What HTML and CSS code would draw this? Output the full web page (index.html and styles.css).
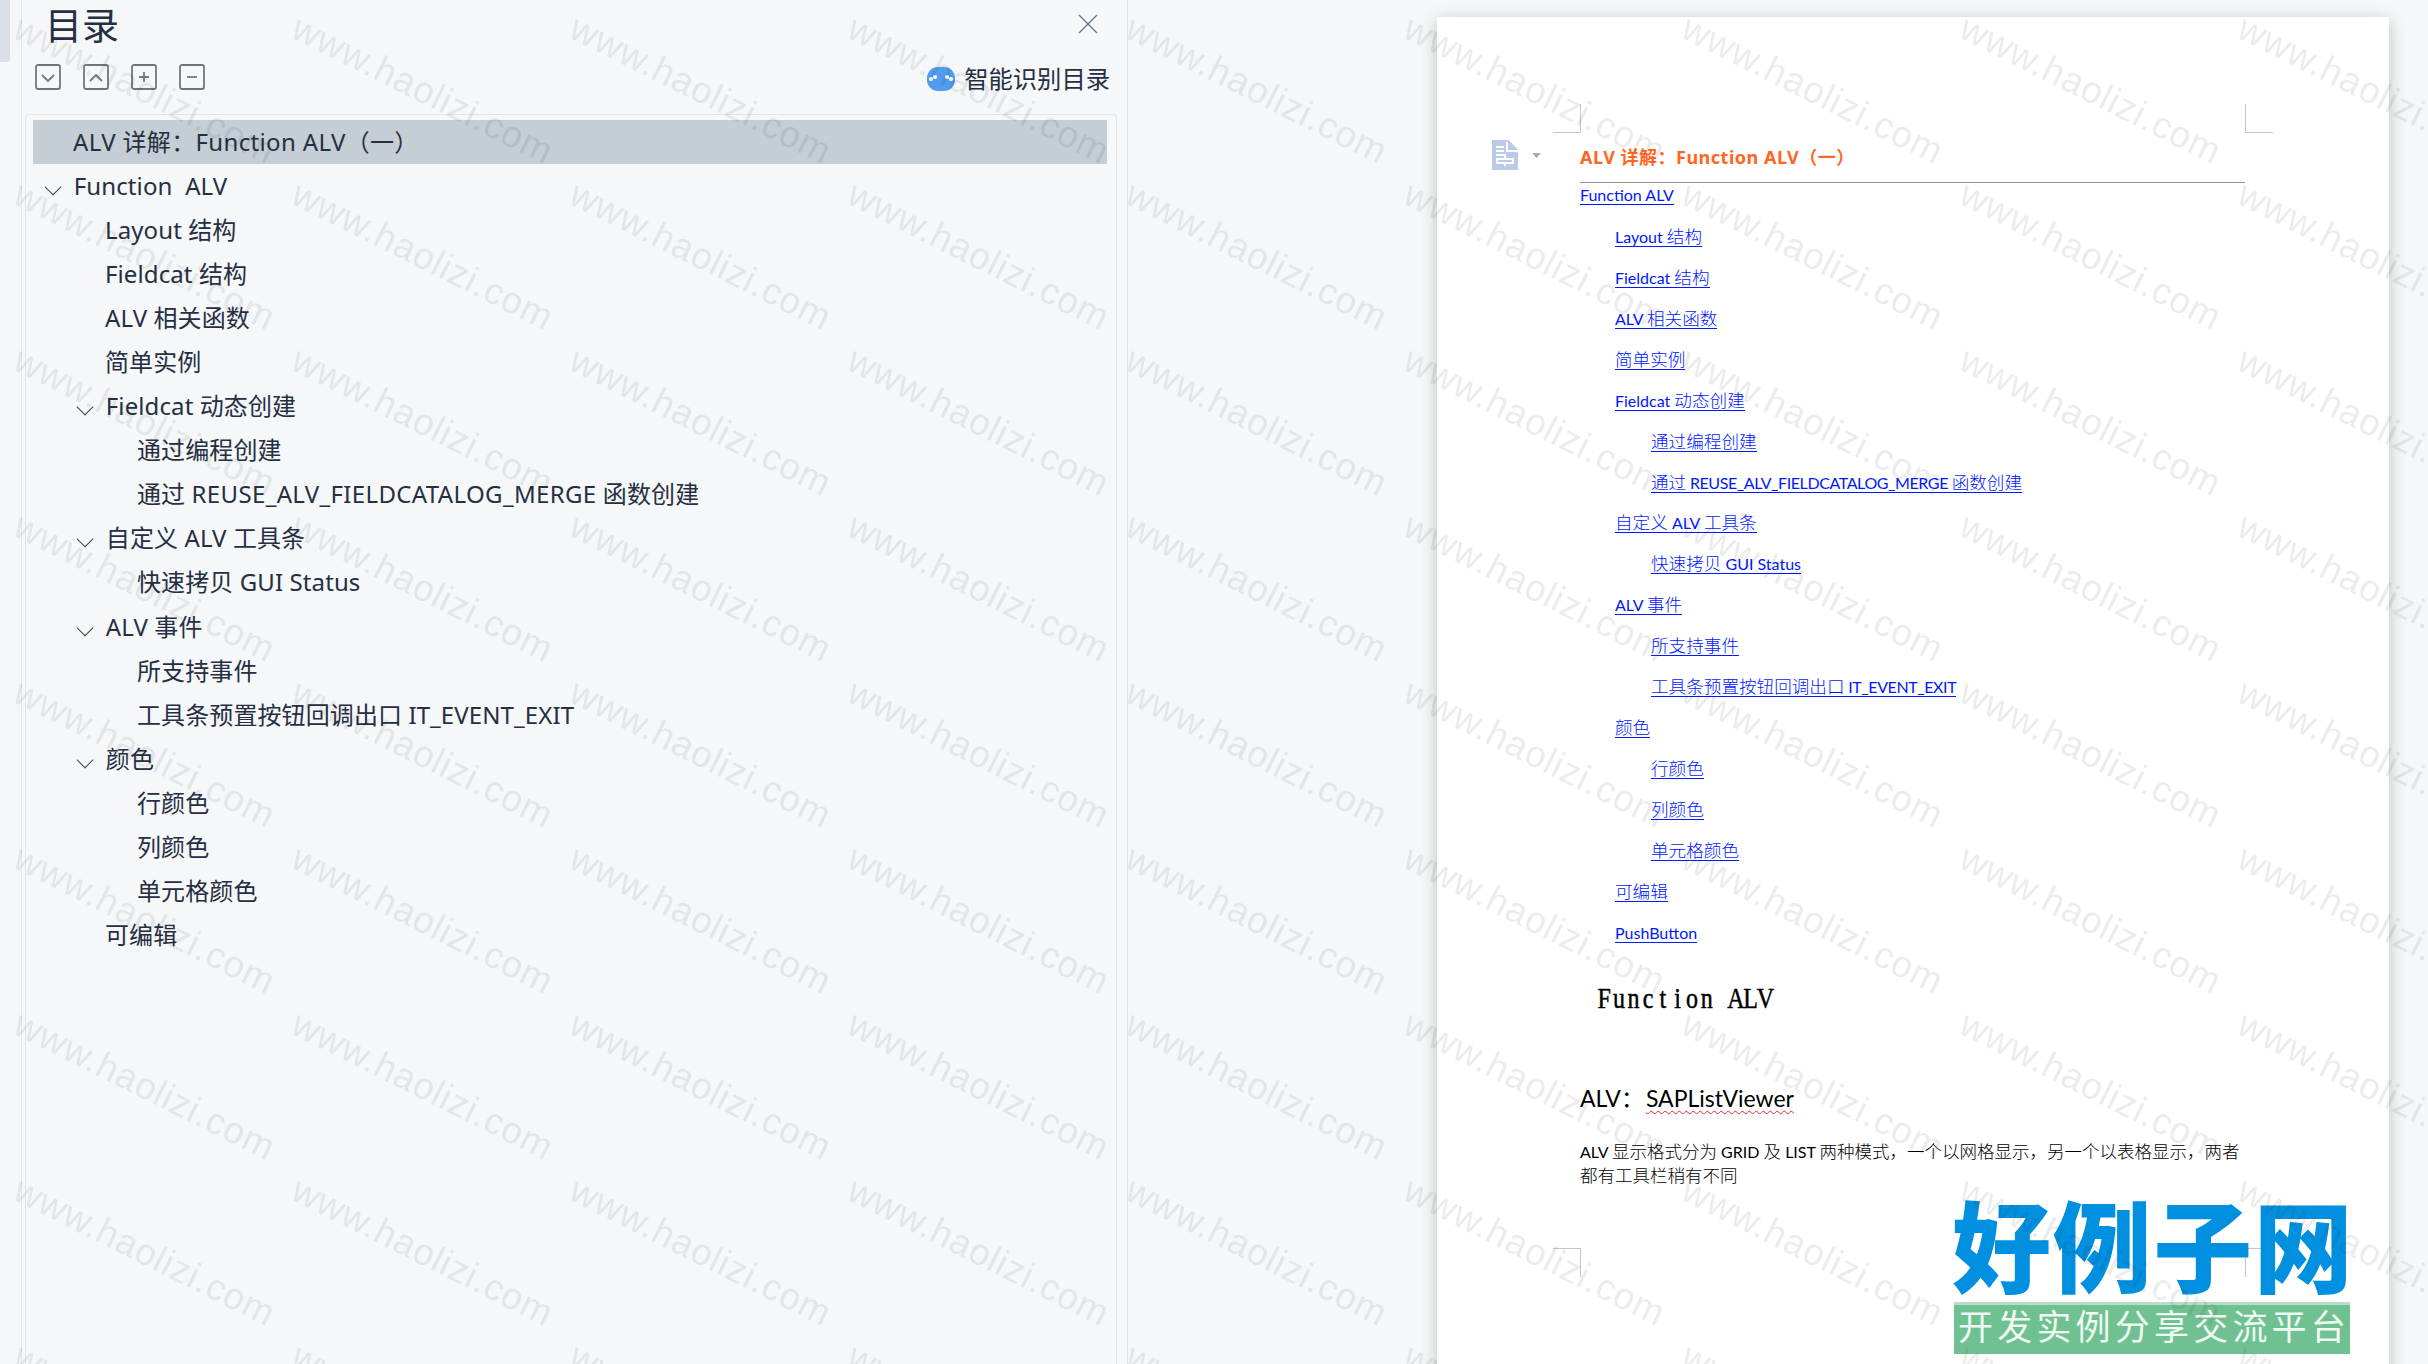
FILE: index.html
```html
<!DOCTYPE html>
<html lang="zh-CN">
<head>
  <meta charset="UTF-8" />
  <meta name="viewport" content="width=device-width, initial-scale=1.0"/>
  <title>ALV 详解</title>
  <link rel="stylesheet" href="styles.css">
</head>
<body>
  <div class="rail"><div class="rail-thumb"></div></div>

  <!-- Outline panel -->
  <aside class="outline">
    <header class="outline-header">
      <h1>目录</h1>
      <svg class="close" width="20" height="20" viewBox="0 0 20 20"><path d="M1 1L19 19M19 1L1 19"/></svg>
    </header>

    <div class="toolbar">
      <div class="tools">
        <svg width="26" height="26" viewBox="0 0 26 26"><rect x="1" y="1" width="24" height="24" rx="2"/><path d="M7 11L13 17L19 11"/></svg>
        <svg width="26" height="26" viewBox="0 0 26 26"><rect x="1" y="1" width="24" height="24" rx="2"/><path d="M7 17L13 11L19 17"/></svg>
        <svg width="26" height="26" viewBox="0 0 26 26"><rect x="1" y="1" width="24" height="24" rx="2"/><path d="M8 13H18M13 8V18"/></svg>
        <svg width="26" height="26" viewBox="0 0 26 26"><rect x="1" y="1" width="24" height="24" rx="2"/><path d="M8 13H18"/></svg>
      </div>
      <div class="smart">
        <svg width="28" height="24" viewBox="0 0 28 24">
          <rect width="28" height="24" rx="11" fill="#509df0"/>
          <g fill="#fff"><circle cx="4" cy="12" r="2.1"/><circle cx="8" cy="10" r="2.1"/><circle cx="20" cy="10" r="2.1"/><circle cx="24" cy="12" r="2.1"/></g>
        </svg>
        <span>智能识别目录</span>
      </div>
    </div>

    <ul class="tree">
      <li class="selected">ALV 详解：Function ALV（一）</li>
      <li class="open">Function&nbsp; ALV</li>
      <li class="l2">Layout 结构</li>
      <li class="l2">Fieldcat 结构</li>
      <li class="l2">ALV 相关函数</li>
      <li class="l2">简单实例</li>
      <li class="l2 open">Fieldcat 动态创建</li>
      <li class="l3">通过编程创建</li>
      <li class="l3">通过 <span class="caps">REUSE_ALV_FIELDCATALOG_MERGE</span> 函数创建</li>
      <li class="l2 open">自定义 ALV 工具条</li>
      <li class="l3">快速拷贝 GUI Status</li>
      <li class="l2 open">ALV 事件</li>
      <li class="l3">所支持事件</li>
      <li class="l3">工具条预置按钮回调出口 IT_EVENT_EXIT</li>
      <li class="l2 open">颜色</li>
      <li class="l3">行颜色</li>
      <li class="l3">列颜色</li>
      <li class="l3">单元格颜色</li>
      <li class="l2">可编辑</li>
    </ul>
  </aside>

  <!-- Document -->
  <main class="workspace">
    <article class="page">
      <i class="crop tl"></i><i class="crop tr"></i><i class="crop bl"></i><i class="crop br"></i>

      <div class="doc-tool">
        <svg width="26" height="30" viewBox="0 0 26 30" shape-rendering="crispEdges">
          <path d="M0 0H16L26 10V30H0Z" fill="#b9cbe9"/>
          <path d="M15 2V11H26M4 7H12M4 11H12M4 15H14M13 16V18M13 24V26" fill="none" stroke="#fff" stroke-width="2"/>
          <path d="M4 18H22V24H4Z" fill="#fff"/>
          <path d="M6 20H20V22H6Z" fill="#b9cbe9"/>
        </svg>
        <svg width="9" height="5" viewBox="0 0 9 5"><path d="M0 0H9L4.500 5Z" fill="#aaa"/></svg>
      </div>

      <h2 class="doc-title">ALV 详解：Function ALV（一）</h2>

      <div class="toc">
        <a class="first"><span class="en">Function ALV</span></a>
        <a class="t2"><span class="en">Layout </span>结构</a>
        <a class="t2"><span class="en">Fieldcat </span>结构</a>
        <a class="t2"><span class="en">ALV </span>相关函数</a>
        <a class="t2">简单实例</a>
        <a class="t2"><span class="en">Fieldcat </span>动态创建</a>
        <a class="t3">通过编程创建</a>
        <a class="t3">通过<span class="en caps"> REUSE_ALV_FIELDCATALOG_MERGE </span>函数创建</a>
        <a class="t2">自定义<span class="en"> ALV </span>工具条</a>
        <a class="t3">快速拷贝<span class="en"> GUI Status</span></a>
        <a class="t2"><span class="en">ALV </span>事件</a>
        <a class="t3">所支持事件</a>
        <a class="t3">工具条预置按钮回调出口<span class="en caps"> IT_EVENT_EXIT</span></a>
        <a class="t2">颜色</a>
        <a class="t3">行颜色</a>
        <a class="t3">列颜色</a>
        <a class="t3">单元格颜色</a>
        <a class="t2">可编辑</a>
        <a class="t2"><span class="en">PushButton</span></a>
      </div>

      <svg class="chapter" width="190" height="40">
        <text transform="scale(.8 1)" y="28" x="9.100 27.400 45.700 64 82.300 100.600 118.900 137.200 155.500 173.800 192.100 210.400">Function ALV</text>
      </svg>

      <h3 class="section">ALV：<span class="typo">SAPListViewer</span></h3>
      <p class="para">
        <span class="line"><span class="en">ALV </span>显示格式分为<span class="en"> GRID </span>及<span class="en"> LIST </span>两种模式，一个以网格显示，另一个以表格显示，两者</span>
        <span>都有工具栏稍有不同</span>
      </p>
    </article>
  </main>

  <div class="logo">
    <div class="logo-name">好例子网</div>
    <div class="logo-sub">开发实例分享交流平台</div>
  </div>

  <svg class="watermark" width="2428" height="1364">
    <defs>
      <pattern id="wm" width="278" height="166" patternUnits="userSpaceOnUse">
        <text transform="translate(11 36.500) rotate(26.600)" textLength="286">www.haolizi.com</text>
      </pattern>
    </defs>
    <rect width="2428" height="1364" fill="url(#wm)"/>
  </svg>
</body>
</html>
```
FILE: styles.css
```css
/* General Styles */
* {
  box-sizing: border-box;
}

body {
  margin: 0;
  height: 1364px;
  display: flex;
  position: relative;
  overflow: hidden;
  background-color: #f5f7f9;
  color: #262f42;
  font-family: 'Noto Sans', 'Noto Sans CJK SC', sans-serif;
}

h1, h2, h3, p, ul {
  margin: 0;
  padding: 0;
  font-weight: 400;
}

.rail {
  width: 22px;
  border-right: 1px solid #e4e7ea;
}

.rail-thumb {
  width: 10px;
  height: 62px;
  background-color: #dadfe8;
  border-radius: 0 0 4px 0;
}

/* Outline */
.outline {
  width: 1106px;
  border-right: 1px solid #e0e3e7;
  padding: 0 10px 0 3px;
  display: flex;
  flex-direction: column;
}

.outline-header {
  height: 56px;
  padding: 0 19px 0 20px;
  display: flex;
  justify-content: space-between;
}

.outline-header h1 {
  font-size: 37px;
  line-height: 51px;
}

.close {
  margin-top: 14px;
  fill: none;
  stroke: #667289;
  stroke-width: 1.3;
}

.toolbar {
  height: 58px;
  padding: 8px 7px 0 10px;
  display: flex;
  justify-content: space-between;
  align-items: flex-start;
}

.tools {
  display: flex;
  gap: 22px;
}

.tools svg {
  fill: none;
  stroke: #757575;
  stroke-width: 1.8;
}

.smart {
  display: flex;
  align-items: center;
  gap: 9px;
  font-size: 24.3px;
  line-height: 30px;
}

.tree {
  flex: 1;
  list-style: none;
  border: 1px solid #e1e4e8;
  border-bottom: 0;
  border-radius: 4px 4px 0 0;
  padding: 5px 9px 0 7px;
  font-size: 24px;
}

.tree li {
  height: 44.05px;
  line-height: 43.4px;
  padding-left: 40px;
  white-space: nowrap;
  letter-spacing: 0.1px;
}

.tree li.selected {
  background-color: #c5cdd5;
  letter-spacing: 0.35px;
}

.tree li.l2 {
  padding-left: 72px;
}

.tree li.l3 {
  padding-left: 104px;
}

.tree .caps {
  letter-spacing: 0.35px;
}

.tree li.open::before {
  content: '';
  display: inline-block;
  width: 11px;
  height: 11px;
  margin: 0 15px 2px -26.2px;
  border: solid #3a4254;
  border-width: 0 1.5px 1.5px 0;
  transform: rotate(45deg);
}

/* Document */
.workspace {
  flex: 1;
  padding: 17px 0 0 309px;
}

.page {
  position: relative;
  width: 952px;
  height: 1400px;
  padding: 123px 144px 0 55px;
  background-color: #fff;
  box-shadow: 0 3px 16px rgba(0, 0, 0, 0.22);
  display: grid;
  grid-template-columns: 88px 665px;
  align-content: start;
}

.crop {
  position: absolute;
  width: 28px;
  height: 29px;
  border: 0 solid #c6c6c6;
}

.tl { left: 116px; top: 87px; border-width: 0 1px 1px 0; }
.tr { left: 808px; top: 87px; border-width: 0 0 1px 1px; }
.bl { left: 116px; top: 1231px; border-width: 1px 1px 0 0; }
.br { left: 808px; top: 1231px; border-width: 1px 0 0 1px; }

.doc-tool {
  display: flex;
  align-items: center;
  gap: 14px;
  height: 30px;
}

.doc-title {
  height: 43px;
  border-bottom: 1px solid #949494;
  color: #ff661f;
  font-size: 18px;
  font-weight: 700;
  line-height: 34px;
  letter-spacing: 0.5px;
}

.toc,
.chapter,
.section,
.para {
  grid-column: 2;
  color: #000;
  font-family: 'Lato', 'Noto Sans CJK SC', sans-serif;
}

.toc {
  display: flex;
  flex-direction: column;
  align-items: flex-start;
  font-size: 17.6px;
  font-weight: 300;
}

.toc a {
  height: 22px;
  line-height: 23px;
  margin-bottom: 18.93px;
  border-bottom: 1px solid #0018ff;
  color: #0018ff;
  white-space: nowrap;
}

.toc a.first {
  margin-bottom: 20px;
}

.toc .t2 {
  margin-left: 35px;
}

.toc .t3 {
  margin-left: 71px;
}

.en {
  font-size: 16px;
  font-weight: 400;
}

.toc .caps {
  letter-spacing: -0.4px;
}

.chapter {
  margin: 18px 0 0 17px;
}

.chapter text {
  font-family: 'Liberation Serif', serif;
  font-size: 30px;
  text-anchor: middle;
  stroke: #000;
  stroke-width: 0.5;
}

.section {
  margin-top: 60px;
  font-size: 23px;
  line-height: 36px;
}

.typo {
  margin-left: 2px;
  text-decoration: underline wavy #f02030 1px;
  text-underline-offset: 3px;
}

.para {
  margin-top: 24px;
  font-size: 17.5px;
  font-weight: 300;
  line-height: 24.7px;
}

.para .line {
  display: block;
  white-space: nowrap;
}

/* Site logo */
.logo {
  position: absolute;
  left: 1952px;
  top: 1192px;
  width: 398px;
}

.logo-name {
  height: 110px;
  line-height: 110px;
  font-size: 99px;
  font-weight: 900;
  letter-spacing: 1.6px;
  color: #0090df;
  white-space: nowrap;
}

.logo-sub {
  margin-left: 2px;
  height: 52px;
  padding-left: 4px;
  border-top: 3px solid #b6dfc7;
  background-color: #70c192;
  color: #eefaf2;
  font-size: 35px;
  line-height: 44px;
  letter-spacing: 4.2px;
  white-space: nowrap;
}

.watermark {
  position: absolute;
  left: 0;
  top: 0;
  pointer-events: none;
}

.watermark text {
  font-family: 'Liberation Sans', sans-serif;
  font-size: 37px;
  fill: rgba(0, 0, 0, 0.075);
}
```
